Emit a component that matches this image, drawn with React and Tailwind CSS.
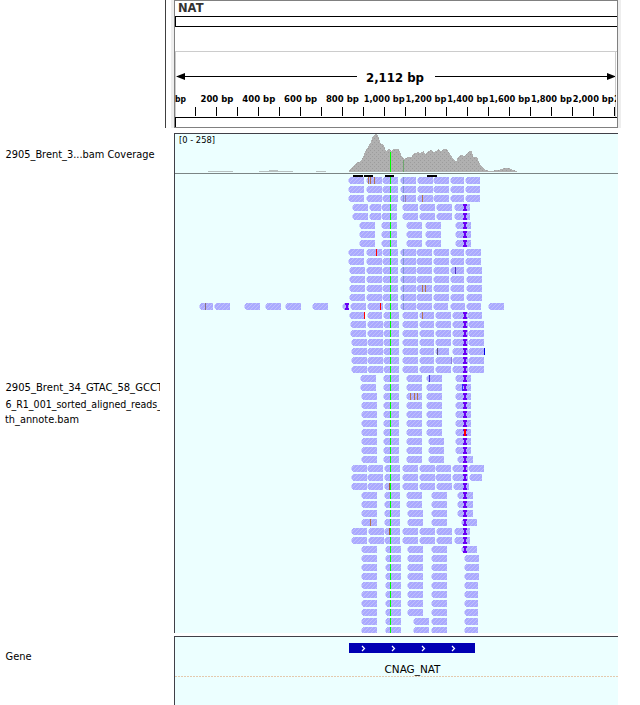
import React from "react";

const A = [348, 366, 382, 400, 417, 433, [450, 464], [465, 480]];
const B = [352, [369, 381], [381, 397], 402, 419, 436, 454];
const C = [359, 381, 406, 425, 455];
const D = [348, 366, 382, 400, 416, 433, [450, 464], 465];
const E = [349, 366, 382, 400, 416, 433, [450, 464], 466];
const F = [350, 367, 383, 402, [419, 434], 435, 452, 468];
const G = [351, 367, 383, 402, [419, 434], 435, 452, 468];
const H = [360, 383, 406, 426, 455];
const I = [361, 383, 406, 426, 455];
const J = [361, 383, 406, 428, 455];
const K = [351, 368, 384, 402, 419, 436, 454];
const L = [361, 385, 407, 431, [464, 479]];
const M = [361, 385, 407, 431, [464, 478]];
const N = [361, 385, 413, 431, [464, 478]];

// Aligned reads, one list per row; a bare number is the start of a 16px read.
const ROWS = [
  A, A, A, B, B, C, C, C, D, D, E, E, E, E,
  [[199, 213], 214, 244, 265, 285, 312, [342, 349], 350, 367, [384, 398], 400, 416, [433, 448], [450, 465], [466, 481], 488],
  [349, [367, 382], 383, 402, [419, 434], 435, 452, [467, 482]],
  F, F, G,
  [351, 367, 383, 402, [419, 434], [435, 449], 452, 468],
  G, G, H, H, I, I, I, I, I, J, J,
  [361, 383, 406, 428, 457],
  [351, 367, 384, 402, 419, 435, 452, 468],
  [351, 367, 384, 402, 419, 435, 452, [469, 482]],
  [351, 367, 384, 402, 419, 436, 453],
  [361, 384, 406, 431, 457],
  [361, 384, 406, 431, 457],
  [361, 384, 407, 431, 457],
  [361, 384, 407, 431, 461],
  K, K,
  [361, 385, 407, 431, 461],
  L, L, L, M, M, M, M, N, N,
];

const OR = "#b3764f";
const RED = "#ff0000";
const BLUE = "#0000e6";
// Mismatched bases: [row, x, colour]
const SNPS = [
  [0, 368, OR], [0, 370, OR], [0, 374, OR], [2, 405, "#9a80b0"], [2, 422, OR],
  [8, 376, RED], [10, 455, "#5030c0"], [12, 422, OR], [12, 425, OR],
  [14, 205, "#8a7080"], [14, 380, RED], [15, 364, RED], [15, 422, OR],
  [19, 437, "#5c5080"], [19, 484, BLUE], [20, 451, "#8c80d8"], [22, 429, "#4030c8"],
  [24, 410, OR], [24, 414, OR], [24, 417, OR],
  [34, 389, "#a06030"], [38, 370, OR], [39, 389, "#a06030"],
];

const COVERAGE =
  "349,172 349,170 352,167 356,163 361,161 363,157 366,150 368,147 371,142 373,136 375,134 378,135 379,139 381,144 384,145 386,151 389,149 391,151 394,149 399,149 400,152 402,157 404,159 408,157 412,157 413,154 418,152 420,153 424,151 425,154 428,151 432,150 433,152 437,151 438,149 441,151 443,149 447,149 450,154 454,160 456,162 458,157 461,155 465,156 467,153 470,151 472,151 473,157 477,157 480,164 485,170 490,171 498,170 501,169 505,168 509,168 513,170 517,171 517,172";

const rowY = (i) => 177 + i * 9;
const hasInsertion = (i) => (i >= 3 && i <= 7) || (i >= 15 && i <= 41);

function Insertion({ x, y }) {
  return <path d={`M${x} ${y}h4v2h-1v3h1v2h-4v-2h1v-3h-1z`} fill="#6a00f4" />;
}

function Ruler() {
  const ticks = Array.from({ length: 21 }, (_, k) => Math.round(195 + k * 20.95));
  const labels = ["200", "400", "600", "800", "1,000", "1,200", "1,400", "1,600", "1,800", "2,000"];
  return (
    <svg width="441" height="65" viewBox="175 52 441 65" className="block">
      <path d="M184 76.5H357M435 76.5H608" stroke="#000" shapeRendering="crispEdges" />
      <path d="M176 76.5l9-3.5v7zM616 76.5l-9-3.5v7z" />
      <path d="M175.5 52V117M615.5 52V117" stroke="#ccc" />
      <text x="366" y="82" textLength="58" lengthAdjust="spacingAndGlyphs" fontSize="12.5" fontWeight="bold">2,112 bp</text>
      {ticks.map((x) => (
        <rect key={x} x={x} y="107" width="1" height="9" shapeRendering="crispEdges" />
      ))}
      <g fontSize="9.5" fontWeight="bold">
        <text x="175" y="102" textLength="11" lengthAdjust="spacingAndGlyphs">bp</text>
        {labels.map((t, k) => {
          const w = k < 4 ? 33 : 41;
          return (
            <text key={t} x={217 + k * 41.8 - w / 2} y="102" textLength={w} lengthAdjust="spacingAndGlyphs">
              {t} bp
            </text>
          );
        })}
        <text x="614" y="102">2,200 bp</text>
      </g>
    </svg>
  );
}

function Alignments() {
  return (
    <svg width="443" height="499" viewBox="175 134 443 499" className="block" shapeRendering="crispEdges">
      <defs>
        <pattern id="read" width="4" height="4" patternUnits="userSpaceOnUse">
          <rect width="4" height="4" fill="#aaaaff" />
          <path d="M3 0h1v1H3zM2 1h1v1H2zM1 2h1v1H1zM0 3h1v1H0z" fill="#c0c0fa" />
        </pattern>
        <pattern id="cov" width="4" height="4" patternUnits="userSpaceOnUse">
          <rect width="4" height="4" fill="#b0b0b0" />
          <path d="M0 0h1v1H0zM2 2h1v1H2z" fill="#9c9c9c" />
        </pattern>
      </defs>
      <text x="179" y="143" fontSize="9" textLength="36" lengthAdjust="spacingAndGlyphs">[0 - 258]</text>
      <polygon points={COVERAGE} fill="url(#cov)" />
      <path d="M208 171h25v1h-25zM259 171h34v1h-34zM269 170h9v1h-9zM316 171h10v1h-10z" fill="#b8c0c0" />
      <rect x="390" y="152" width="1" height="20" fill="#00ff00" />
      <rect x="403" y="160" width="1" height="12" fill="#6fa66f" />
      <rect x="175" y="173" width="443" height="1" fill="#7b8585" />
      <path d="M353 175h10v2h-10zM364 175h9v2h-9zM385 175h9v2h-9zM427 175h10v2h-10z" />
      {ROWS.map((row, i) => {
        const y = rowY(i);
        return (
          <g key={i}>
            {row.map((r) => {
              const [a, b] = Array.isArray(r) ? r : [r, r + 16];
              return (
                <g key={a}>
                  <path d={`M${a + 2} ${y}H${b}V${y + 7}H${a + 2}V${y + 6}H${a + 1}V${y + 1}H${a + 2}Z`} fill="url(#read)" />
                  <rect x={a} y={y + 2} width="1" height="3" fill="#cfd4ff" />
                </g>
              );
            })}
            <rect x="390" y={y} width="1" height="7" fill="#00ff00" />
            {(i < 3 || (i > 7 && i < 15)) && <rect x="403" y={y} width="1" height="7" fill="#7f96d0" />}
            {hasInsertion(i) && <Insertion x={463} y={y} />}
          </g>
        );
      })}
      <Insertion x={345} y={rowY(14)} />
      {SNPS.map(([r, x, c]) => (
        <rect key={`${r}-${x}`} x={x} y={rowY(r)} width="1" height="7" fill={c} />
      ))}
      <rect x="462" y={rowY(23)} width="1" height="7" fill="#3030ff" />
      <rect x="464" y={rowY(28)} width="2" height="7" fill={RED} />
    </svg>
  );
}

function GeneTrack() {
  return (
    <svg width="443" height="68" viewBox="175 637 443 68" className="block">
      <rect x="349" y="643" width="126" height="10" fill="#0000b3" />
      {[362, 392, 422, 452].map((x) => (
        <path key={x} d={`M${x} 646l2.5 2.5l-2.5 2.5`} fill="none" stroke="#fff" strokeWidth="1.2" />
      ))}
      <text x="384.5" y="673" fontSize="10" textLength="56" lengthAdjust="spacingAndGlyphs">CNAG_NAT</text>
      <path d="M175 676.5H618" stroke="#e4c9ae" strokeDasharray="2 1" />
    </svg>
  );
}

export default function App() {
  return (
    <div className="flex h-[705px] w-[640px] flex-col overflow-hidden bg-white font-['DejaVu_Sans',sans-serif] text-black">
      <header className="flex h-[128px] shrink-0">
        <div className="w-[166px] border-r border-[#404040]" />
        <div className="w-[5px]" />
        <div className="w-[3px] bg-[#eeeeee]" />
        <div className="flex w-[444px] flex-col border border-[#808080]">
          <div className="h-[15px] pl-[3px] text-[11.5px] leading-[15px] font-bold text-[#333333]">NAT</div>
          <div className="h-[11px] border-y border-l border-black" />
          <div className="h-[24px]" />
          <div className="h-[66px] overflow-hidden border-t border-[#cccccc]">
            <Ruler />
          </div>
          <div className="grow border-t border-l border-black" />
        </div>
        <div className="w-[3px] bg-[#eeeeee]" />
      </header>
      <div className="mt-[5px] flex h-[500px] shrink-0">
        <div className="flex w-[174px] flex-col pl-[5px] text-[10px] leading-[16px]">
          <div className="mt-[13px] w-[155px] overflow-hidden whitespace-nowrap">
            <svg width="155" height="16" className="block">
              <text x="0.5" y="11.5" textLength="149" lengthAdjust="spacingAndGlyphs">2905_Brent_3...bam Coverage</text>
            </svg>
          </div>
          <div className="mt-[218px] w-[155px] overflow-hidden">
            <svg width="155" height="48" className="block">
              <text x="0.5" y="11" textLength="157.5" lengthAdjust="spacingAndGlyphs">2905_Brent_34_GTAC_58_GCCT</text>
              <text x="0.5" y="28" textLength="156.5" lengthAdjust="spacingAndGlyphs">6_R1_001_sorted_aligned_reads_</text>
              <text x="0" y="43" textLength="74" lengthAdjust="spacingAndGlyphs">th_annote.bam</text>
            </svg>
          </div>
        </div>
        <div className="w-[444px] border-t border-l border-[#404048] bg-[#ecffff]">
          <Alignments />
        </div>
      </div>
      <div className="mt-[3px] flex h-[69px] shrink-0">
        <div className="w-[174px] pt-[13px] pl-[5px] text-[10px] leading-[16px]">
          <svg width="60" height="16" className="block">
            <text x="0.5" y="11" textLength="26" lengthAdjust="spacingAndGlyphs">Gene</text>
          </svg>
        </div>
        <div className="w-[444px] border-t border-l border-[#404048] bg-[#ecffff]">
          <GeneTrack />
        </div>
      </div>
    </div>
  );
}
